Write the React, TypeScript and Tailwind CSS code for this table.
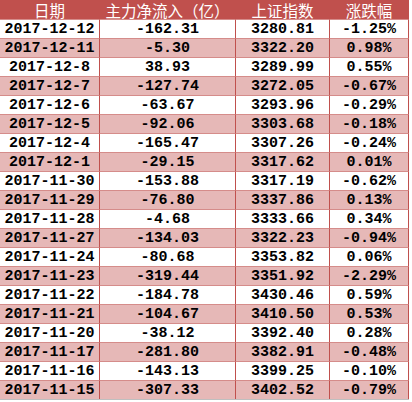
const rows: [string, string, string, string][] = [
  ["2017-12-12", "-162.31", "3280.81", "-1.25%"],
  ["2017-12-11", "-5.30", "3322.20", "0.98%"],
  ["2017-12-8", "38.93", "3289.99", "0.55%"],
  ["2017-12-7", "-127.74", "3272.05", "-0.67%"],
  ["2017-12-6", "-63.67", "3293.96", "-0.29%"],
  ["2017-12-5", "-92.06", "3303.68", "-0.18%"],
  ["2017-12-4", "-165.47", "3307.26", "-0.24%"],
  ["2017-12-1", "-29.15", "3317.62", "0.01%"],
  ["2017-11-30", "-153.88", "3317.19", "-0.62%"],
  ["2017-11-29", "-76.80", "3337.86", "0.13%"],
  ["2017-11-28", "-4.68", "3333.66", "0.34%"],
  ["2017-11-27", "-134.03", "3322.23", "-0.94%"],
  ["2017-11-24", "-80.68", "3353.82", "0.06%"],
  ["2017-11-23", "-319.44", "3351.92", "-2.29%"],
  ["2017-11-22", "-184.78", "3430.46", "0.59%"],
  ["2017-11-21", "-104.67", "3410.50", "0.53%"],
  ["2017-11-20", "-38.12", "3392.40", "0.28%"],
  ["2017-11-17", "-281.80", "3382.91", "-0.48%"],
  ["2017-11-16", "-143.13", "3399.25", "-0.10%"],
  ["2017-11-15", "-307.33", "3402.52", "-0.79%"],
]

const headers = ["日期", "主力净流入（亿）", "上证指数", "涨跌幅"]

export default function App() {
  return (
    <div className="w-[412px] h-[402px] bg-white overflow-hidden">
      <div className="w-[409px] grid grid-cols-[100px_136px_94px_79px]">
        {headers.map((h) => (
          <div
            key={h}
            className="h-[19px] bg-[#c0504d] text-white border-r border-[#c0504d] text-center text-[15.5px] leading-[20px] whitespace-nowrap font-['Noto_Sans_CJK_SC',sans-serif]"
          >
            {h}
          </div>
        ))}
        {rows.map((r, i) =>
          r.map((c, j) => (
            <div
              key={`${i}-${j}`}
              className={`h-[19px] border-t border-r border-t-[#d58c8a] border-r-[#c0504d] text-center pt-[1px] text-[15px] leading-[18px] font-bold text-black whitespace-nowrap font-['Liberation_Mono',monospace] ${
                i % 2 === 1 ? "bg-[#e6b8b7]" : "bg-white"
              }`}
            >
              {c}
            </div>
          ))
        )}
      </div>
      <div className="w-[409px] h-px bg-[#bfbfbf]" />
    </div>
  )
}
